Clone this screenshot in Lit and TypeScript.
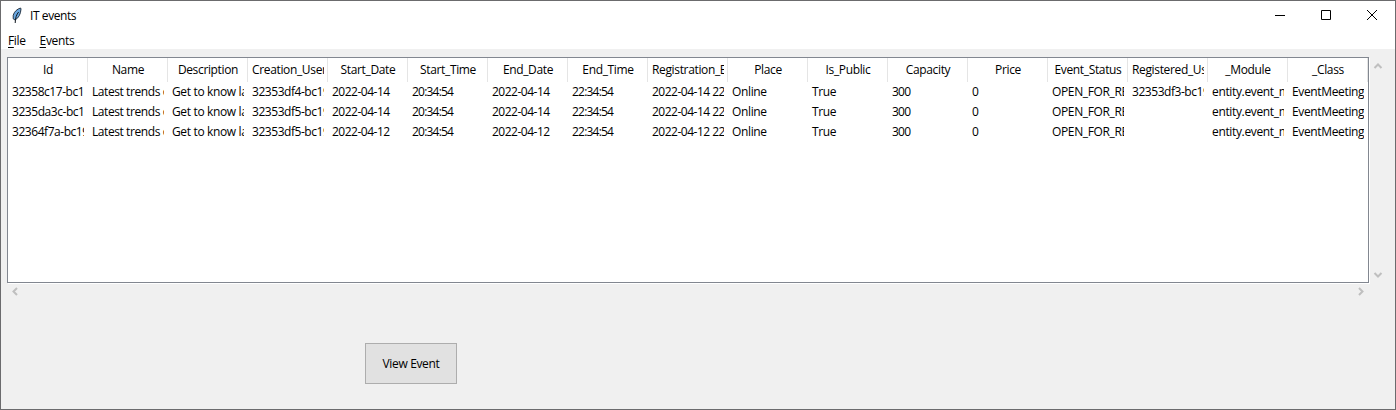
import { LitElement, html, css, svg } from "lit";
import { customElement } from "lit/decorators.js";

interface Column {
  title: string;
  cells: string[];
  kind?: "id" | "date" | "num" | "tight" | "caps";
}

const COLUMNS: Column[] = [
  { title: "Id", kind: "id", cells: ["32358c17-bc19-11ec", "3235da3c-bc19-11ec", "32364f7a-bc19-11ec"] },
  { title: "Name", kind: "tight", cells: ["Latest trends on", "Latest trends on", "Latest trends on"] },
  { title: "Description", cells: ["Get to know latest", "Get to know latest", "Get to know latest"] },
  { title: "Creation_User", kind: "id", cells: ["32353df4-bc19-11ec", "32353df5-bc19-11ec", "32353df5-bc19-11ec"] },
  { title: "Start_Date", kind: "date", cells: ["2022-04-14", "2022-04-14", "2022-04-12"] },
  { title: "Start_Time", kind: "num", cells: ["20:34:54", "20:34:54", "20:34:54"] },
  { title: "End_Date", kind: "date", cells: ["2022-04-14", "2022-04-14", "2022-04-12"] },
  { title: "End_Time", kind: "num", cells: ["22:34:54", "22:34:54", "22:34:54"] },
  { title: "Registration_End", kind: "date", cells: ["2022-04-14 22:34", "2022-04-14 22:34", "2022-04-12 22:34"] },
  { title: "Place", cells: ["Online", "Online", "Online"] },
  { title: "Is_Public", cells: ["True", "True", "True"] },
  { title: "Capacity", kind: "num", cells: ["300", "300", "300"] },
  { title: "Price", kind: "num", cells: ["0", "0", "0"] },
  { title: "Event_Status", kind: "caps", cells: ["OPEN_FOR_REG", "OPEN_FOR_REG", "OPEN_FOR_REG"] },
  { title: "Registered_Users", kind: "id", cells: ["32353df3-bc19-11ec", "", ""] },
  { title: "_Module", cells: ["entity.event_meeting", "entity.event_meeting", "entity.event_meeting"] },
  { title: "_Class", cells: ["EventMeeting", "EventMeeting", "EventMeeting"] },
];

@customElement("app-root")
export class AppRoot extends LitElement {
  static styles = css`
    :host {
      display: flex;
      flex-direction: column;
      box-sizing: border-box;
      width: 1396px;
      height: 410px;
      border: 1px solid #6b6b6d;
      background: #f0f0f0;
      color: #000;
      font: 12px/20px "Open Sans", "Noto Sans", sans-serif;
      letter-spacing: -0.35px;
      overflow: hidden;
    }
    .title {
      display: flex;
      height: 29px;
      background: #fff;
    }
    .feather { width: 12px; height: 18px; margin: 5px 7px 0 10px; }
    .name { flex: 1; padding-top: 5px; letter-spacing: -0.42px; }
    .control { width: 46px; height: 29px; }
    .menu {
      box-sizing: border-box;
      display: flex;
      gap: 14px;
      height: 19px;
      padding: 1px 0 0 7px;
      background: #fff;
    }
    .menu u { text-underline-offset: 2px; text-decoration-skip-ink: none; }
    .area {
      display: grid;
      grid-template-columns: 1362px 17px;
      grid-template-rows: 226px 17px;
      padding: 8px 0 0 6px;
    }
    .table {
      box-sizing: border-box;
      display: flex;
      background: #fff;
      border: 1px solid #828790;
      box-shadow: 1px 1px 0 #fff;
    }
    .column { flex: 0 0 80px; width: 80px; }
    .head, .cell {
      box-sizing: border-box;
      padding-left: 4px;
      overflow: hidden;
      white-space: nowrap;
    }
    .head {
      height: 24px;
      padding-right: 3px;
      border-right: 1px solid #e5e5e5;
      line-height: 24px;
      text-align: center;
    }
    .cell { width: 76px; height: 20px; }
    .clip { overflow: hidden; }
    .num { letter-spacing: -0.79px; }
    .id { letter-spacing: -0.45px; }
    .date { letter-spacing: -0.5px; }
    .tight { letter-spacing: -0.42px; }
    .caps { letter-spacing: -0.36px; }
    .vbar { display: flex; flex-direction: column; justify-content: space-between; padding-left: 1px; }
    .hbar { display: flex; justify-content: space-between; }
    .arrow { width: 16px; height: 16px; display: block; }
    .button {
      box-sizing: border-box;
      width: 92px;
      height: 41px;
      margin: 43px 0 0 364px;
      padding: 0;
      border: 1px solid #adadad;
      background: #e1e1e1;
      color: #000;
      font: inherit;
      letter-spacing: inherit;
    }
  `;

  private arrow(d: string) {
    return html`<svg class="arrow" viewBox="0 0 16 16">${svg`<path d=${d} fill="none" stroke="#bfbfbf" stroke-width="2" />`}</svg>`;
  }

  render() {
    return html`
      <div class="title">
        <svg class="feather" viewBox="0 0 12 18">
          <path d="M9.6 2 C6.4 2.8 3.2 5.6 2.2 9.2 L2.2 12.8 L4 14 C7.5 12.2 9.7 8.2 10 3 Z" fill="#6aa7e0" stroke="#1c2835" stroke-width="0.9" />
          <path d="M7.6 6 C5.6 8.5 4.3 11.5 4.2 17" fill="none" stroke="#101820" stroke-width="1" />
        </svg>
        <div class="name">IT events</div>
        <svg class="control" viewBox="0 0 46 29"><path d="M18 14.5h10" stroke="#000" /></svg>
        <svg class="control" viewBox="0 0 46 29"><path d="M18.5 9.5h9v9h-9z" fill="none" stroke="#000" /></svg>
        <svg class="control" viewBox="0 0 46 29"><path d="M18 9l10 10M28 9L18 19" stroke="#000" /></svg>
      </div>
      <div class="menu"><span><u>F</u>ile</span><span><u>E</u>vents</span></div>
      <div class="area">
        <div class="table">
          ${COLUMNS.map(
            (c) => html`<div class="column">
              <div class="head"><div class="clip">${c.title}</div></div>
              ${c.cells.map((t) => html`<div class="cell ${c.kind ?? ""}">${t}</div>`)}
            </div>`
          )}
        </div>
        <div class="vbar">
          ${this.arrow("M4.5 11L8 7.5L11.5 11")}
          ${this.arrow("M4.5 6L8 9.5L11.5 6")}
        </div>
        <div class="hbar">
          ${this.arrow("M10 5L6.5 8.5L10 12")}
          ${this.arrow("M6 5L9.5 8.5L6 12")}
        </div>
      </div>
      <button class="button">View Event</button>
    `;
  }
}
